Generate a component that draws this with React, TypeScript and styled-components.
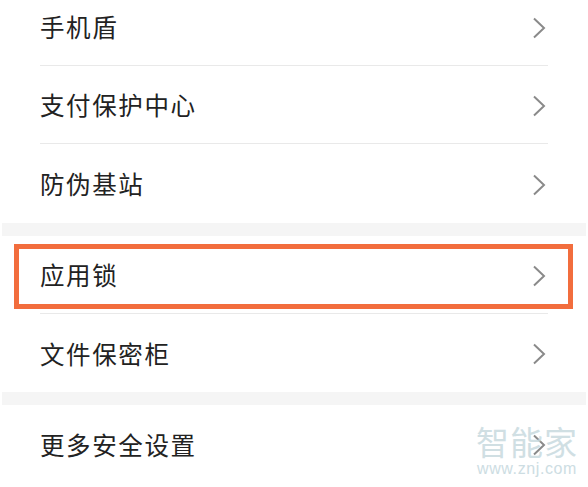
import React from "react";
import styled, { createGlobalStyle } from "styled-components";

const Global = createGlobalStyle`
  html, body { margin: 0; padding: 0; background: #ffffff; }
  body { width: 588px; height: 487px; overflow: hidden; }
`;

const Page = styled.div`
  position: relative;
  width: 588px;
  height: 487px;
  overflow: hidden;
  background: #fff;
  font-family: "Noto Sans CJK SC", "Noto Sans", sans-serif;
`;

const List = styled.div`
  display: flex;
  flex-direction: column;
  margin-top: -12px;
  width: 586px;
`;

const Group = styled.div`
  display: flex;
  flex-direction: column;
  background: #fff;
`;

const Band = styled.div`
  height: 13px;
  background: #f5f5f5;
  margin-left: 2px;
`;

const Row = styled.div<{ $divider?: boolean; $height: number }>`
  position: relative;
  height: ${(p) => p.$height}px;
  margin-left: 40px;
  margin-right: 38px;
  padding-top: 2px;
  display: flex;
  align-items: center;
  justify-content: space-between;
  border-bottom: ${(p) => (p.$divider ? "1.5px solid #e9e9e9" : "none")};
  box-sizing: border-box;
`;

const Label = styled.span`
  font-size: 24.5px;
  color: #222;
  letter-spacing: 1.6px;
  line-height: 1;
`;

const Chevron = styled.svg`
  width: 14px;
  height: 22px;
  margin-right: 2px;
  flex: none;
`;

const Highlight = styled.div`
  position: absolute;
  left: -26px;
  right: -25px;
  top: 8px;
  height: 65px;
  border: 5px solid #f26d3d;
  box-sizing: border-box;
  pointer-events: none;
`;

const Watermark = styled.div`
  position: absolute;
  right: 10px;
  top: 423px;
  display: flex;
  flex-direction: column;
  align-items: center;
  gap: 1px;
  color: #c8dadf;
  pointer-events: none;
`;

const WmTitle = styled.div`
  font-family: "Noto Sans CJK SC", sans-serif;
  font-size: 33px;
  line-height: 37px;
  letter-spacing: 1px;
  opacity: 0.85;
`;

const WmUrl = styled.div`
  font-family: "Liberation Sans", Arial, sans-serif;
  font-size: 16px;
  line-height: 16px;
  letter-spacing: 0.6px;
  opacity: 0.9;
`;

const Arrow = () => (
  <Chevron viewBox="0 0 14 22">
    <polyline points="2,1.5 12,11 2,20.5" fill="none" stroke="#8a8a8a" strokeWidth="2" />
  </Chevron>
);

type Item = { label: string; h: number; divider?: boolean; highlight?: boolean };

const groups: Item[][] = [
  [
    { label: "手机盾", h: 78, divider: true },
    { label: "支付保护中心", h: 78, divider: true },
    { label: "防伪基站", h: 79 },
  ],
  [
    { label: "应用锁", h: 78, divider: true, highlight: true },
    { label: "文件保密柜", h: 78 },
  ],
  [{ label: "更多安全设置", h: 78 }],
];

export default function App() {
  return (
    <Page>
      <Global />
      <List>
        {groups.map((g, gi) => (
          <React.Fragment key={gi}>
            {gi > 0 && <Band />}
            <Group>
              {g.map((it) => (
                <Row key={it.label} $height={it.h} $divider={it.divider}>
                  <Label>{it.label}</Label>
                  <Arrow />
                  {it.highlight && <Highlight />}
                </Row>
              ))}
            </Group>
          </React.Fragment>
        ))}
      </List>
      <Watermark>
        <WmTitle>智能家</WmTitle>
        <WmUrl>www.znj.com</WmUrl>
      </Watermark>
    </Page>
  );
}
